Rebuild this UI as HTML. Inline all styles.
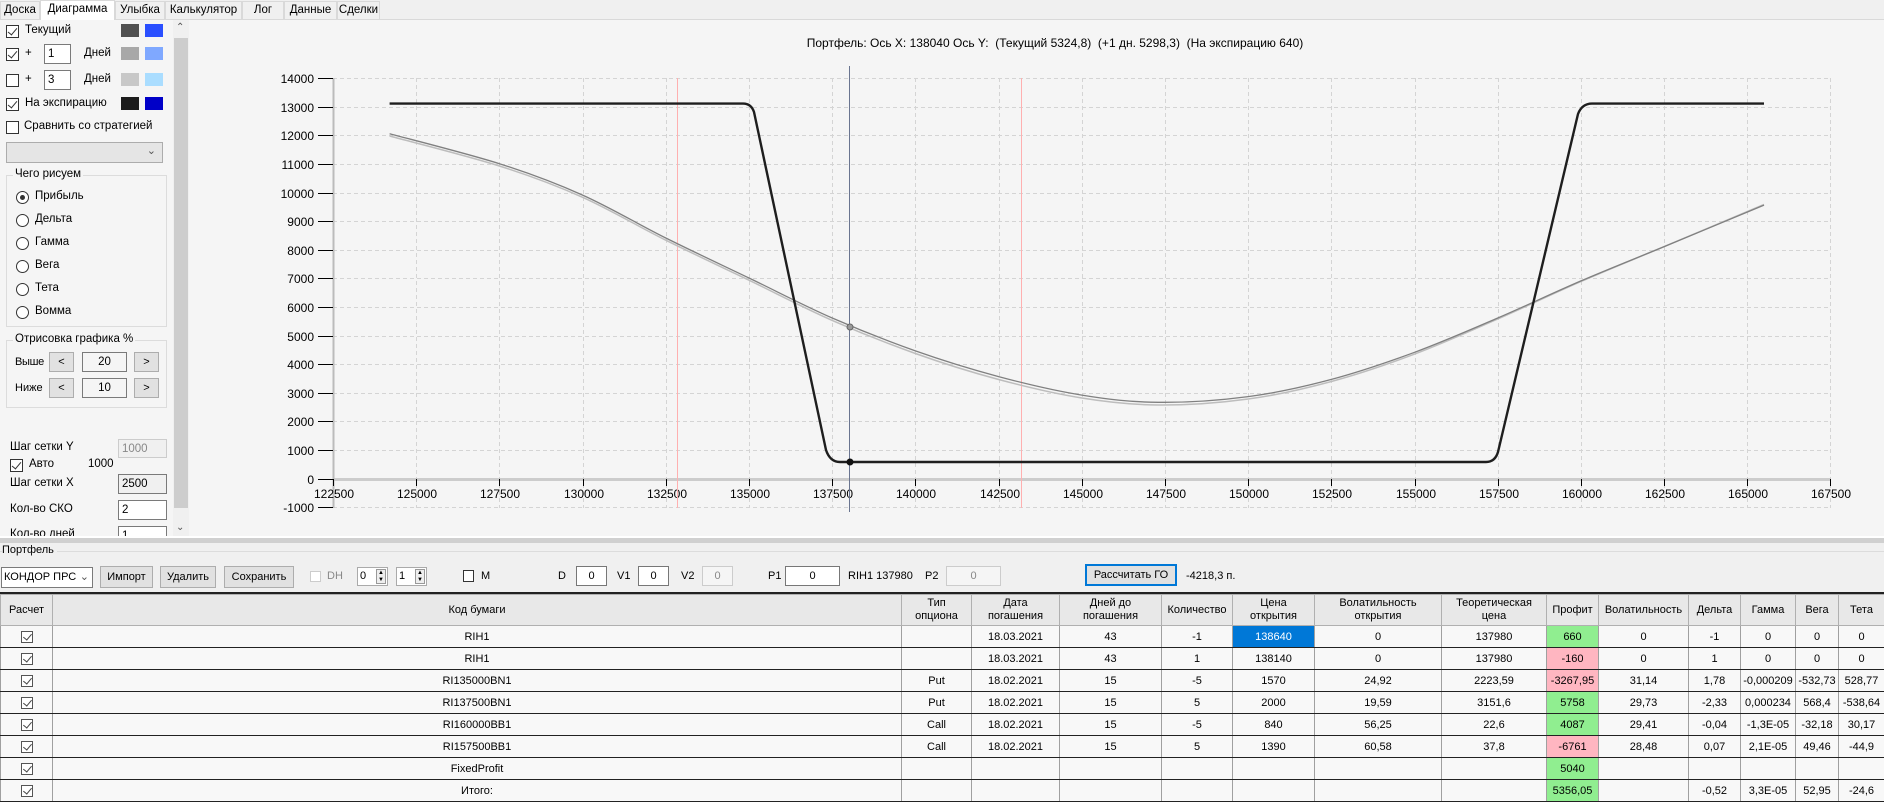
<!DOCTYPE html>
<html><head><meta charset="utf-8">
<style>
*{box-sizing:border-box;margin:0;padding:0}
body{width:1884px;height:801px;overflow:hidden;background:#f0f0f0;font-family:"Liberation Sans",sans-serif;font-size:11.5px;color:#000;position:relative}
.a{position:absolute}
.tab{position:absolute;top:1px;height:18px;border:1px solid #d9d9d9;border-bottom:none;background:#f0f0f0;font-size:11.5px;line-height:16px;text-align:center}
.cb{position:absolute;width:13px;height:13px;border:1px solid #333;background:#fff}
.cb.on::after{content:"";position:absolute;left:3px;top:0px;width:4px;height:8px;border:solid #333;border-width:0 1px 1px 0;transform:rotate(40deg)}
.rb{position:absolute;width:13px;height:13px;border:1px solid #333;border-radius:50%;background:#fff}
.rb.on::after{content:"";position:absolute;left:3px;top:3px;width:5px;height:5px;border-radius:50%;background:#333}
.tb{position:absolute;height:20px;border:1px solid #7a7a7a;background:#fff;padding-left:3px;line-height:18px;font-size:11.5px}
.btn{position:absolute;border:1px solid #adadad;background:#e1e1e1;text-align:center;font-size:11px}
.grp{position:absolute;border:1px solid #dcdcdc}
.grp span{position:absolute;top:-8px;left:6px;background:#f5f5f5;padding:0 2px}
table{border-collapse:collapse;table-layout:fixed;font-size:11px}
td,th{border:1px solid #a0a0a0;text-align:center;height:22px;padding:0;overflow:hidden;white-space:nowrap;font-weight:normal}
th{background:#e8e8e8;height:31px;line-height:13px;border-color:#b0b0b0}
tr td{border-bottom:1px solid #222;background:#f8f8f8}
.g{background:#90ee90 !important}.p{background:#ffb6c1 !important}.s{background:#0078d7 !important;color:#fff}
.ck{display:inline-block;width:12px;height:12px;border:1px solid #555;background:#fff;position:relative;vertical-align:middle}
.ck::after{content:"";position:absolute;left:3px;top:0;width:4px;height:7px;border:solid #444;border-width:0 1px 1px 0;transform:rotate(40deg)}
</style></head><body>
<div class="a" style="left:0;top:19px;width:1884px;height:1px;background:#d9d9d9"></div>
<div class="tab" style="left:0;width:40px">Доска</div>
<div class="tab" style="left:40px;width:75px;top:0;height:20px;background:#fff;border-color:#d9d9d9">Диаграмма</div>
<div class="tab" style="left:115px;width:50px">Улыбка</div>
<div class="tab" style="left:165px;width:77px">Калькулятор</div>
<div class="tab" style="left:242px;width:42px">Лог</div>
<div class="tab" style="left:284px;width:53px">Данные</div>
<div class="tab" style="left:337px;width:43px">Сделки</div>

<div class="a" style="left:0;top:20px;width:173px;height:516px;background:#f5f5f5"></div>
<div class="a" style="left:173px;top:20px;width:16px;height:516px;background:#f0f0f0"></div>
<div class="a" style="left:174px;top:38px;width:14px;height:470px;background:#cdcdcd"></div>
<div class="a" style="left:176px;top:22px;font-size:10px;color:#555">&#8963;</div>
<div class="a" style="left:176px;top:522px;font-size:10px;color:#555">&#8964;</div>

<div class="cb on" style="left:6px;top:25px"></div><div class="a" style="left:25px;top:24px">Текущий</div>
<div class="a" style="left:121px;top:24px;width:18px;height:13px;background:#505050"></div><div class="a" style="left:145px;top:24px;width:18px;height:13px;background:#2a4fff"></div>
<div class="cb on" style="left:6px;top:48px"></div><div class="a" style="left:25px;top:47px">+</div>
<div class="tb" style="left:44px;top:44px;width:27px">1</div><div class="a" style="left:84px;top:47px">Дней</div>
<div class="a" style="left:121px;top:47px;width:18px;height:13px;background:#a8a8a8"></div><div class="a" style="left:145px;top:47px;width:18px;height:13px;background:#7fa8ff"></div>
<div class="cb" style="left:6px;top:74px"></div><div class="a" style="left:25px;top:73px">+</div>
<div class="tb" style="left:44px;top:70px;width:27px">3</div><div class="a" style="left:84px;top:73px">Дней</div>
<div class="a" style="left:121px;top:73px;width:18px;height:13px;background:#c8c8c8"></div><div class="a" style="left:145px;top:73px;width:18px;height:13px;background:#aaddff"></div>
<div class="cb on" style="left:6px;top:98px"></div><div class="a" style="left:25px;top:97px">На экспирацию</div>
<div class="a" style="left:121px;top:97px;width:18px;height:13px;background:#1c1c1c"></div><div class="a" style="left:145px;top:97px;width:18px;height:13px;background:#0000c8"></div>
<div class="cb" style="left:6px;top:121px"></div><div class="a" style="left:24px;top:120px">Сравнить со стратегией</div>
<div class="a" style="left:6px;top:142px;width:157px;height:21px;background:#e5e5e5;border:1px solid #acacac"><span style="position:absolute;right:6px;top:1px;font-size:11px;color:#555">&#8964;</span></div>

<div class="grp" style="left:6px;top:175px;width:161px;height:152px"><span>Чего рисуем</span></div>
<div class="rb on" style="left:16px;top:191px"></div><div class="a" style="left:35px;top:190px">Прибыль</div>
<div class="rb" style="left:16px;top:214px"></div><div class="a" style="left:35px;top:213px">Дельта</div>
<div class="rb" style="left:16px;top:237px"></div><div class="a" style="left:35px;top:236px">Гамма</div>
<div class="rb" style="left:16px;top:260px"></div><div class="a" style="left:35px;top:259px">Вега</div>
<div class="rb" style="left:16px;top:283px"></div><div class="a" style="left:35px;top:282px">Тета</div>
<div class="rb" style="left:16px;top:306px"></div><div class="a" style="left:35px;top:305px">Вомма</div>

<div class="grp" style="left:6px;top:340px;width:161px;height:68px"><span>Отрисовка графика %</span></div>
<div class="a" style="left:15px;top:356px;font-size:11px;letter-spacing:-0.3px">Выше</div>
<div class="btn" style="left:49px;top:352px;width:25px;height:20px;line-height:18px">&lt;</div>
<div class="tb" style="left:82px;top:352px;width:45px;text-align:center;padding:0;background:#f5f5f5">20</div>
<div class="btn" style="left:134px;top:352px;width:25px;height:20px;line-height:18px">&gt;</div>
<div class="a" style="left:15px;top:382px;font-size:11px">Ниже</div>
<div class="btn" style="left:49px;top:378px;width:25px;height:20px;line-height:18px">&lt;</div>
<div class="tb" style="left:82px;top:378px;width:45px;text-align:center;padding:0;background:#f5f5f5">10</div>
<div class="btn" style="left:134px;top:378px;width:25px;height:20px;line-height:18px">&gt;</div>

<div class="a" style="left:10px;top:441px">Шаг сетки Y</div>
<div class="tb" style="left:118px;top:439px;width:49px;height:19px;background:#f0f0f0;color:#888;border-color:#ccc">1000</div>
<div class="cb on" style="left:10px;top:459px"></div><div class="a" style="left:29px;top:458px">Авто</div><div class="a" style="left:88px;top:458px">1000</div>
<div class="a" style="left:10px;top:477px">Шаг сетки X</div>
<div class="tb" style="left:118px;top:474px;width:49px;height:20px;background:#f0f0f0">2500</div>
<div class="a" style="left:10px;top:503px">Кол-во СКО</div>
<div class="tb" style="left:118px;top:500px;width:49px">2</div>
<div style="position:absolute;left:0;top:520px;width:172px;height:16px;overflow:hidden"><div class="a" style="left:10px;top:8px">Кол-во дней</div><div class="tb" style="left:118px;top:6px;width:49px">1</div></div>

<div class="a" style="left:189px;top:20px;width:1695px;height:516px;background:#f5f5f5"></div>
<div class="a" style="left:640px;top:36px;width:830px;text-align:center;font-size:12px">Портфель: Ось X: 138040 Ось Y:&nbsp; (Текущий 5324,8)&nbsp; (+1 дн. 5298,3)&nbsp; (На экспирацию 640)</div>
<svg class="a" style="left:0;top:0" width="1884" height="540" font-family="Liberation Sans" font-size="12">
<g stroke="#d4d4d4" stroke-dasharray="4,3" stroke-width="1">
<line x1="333" y1="78.5" x2="1831" y2="78.5"/><line x1="333" y1="107.5" x2="1831" y2="107.5"/><line x1="333" y1="135.5" x2="1831" y2="135.5"/><line x1="333" y1="164.5" x2="1831" y2="164.5"/><line x1="333" y1="193.5" x2="1831" y2="193.5"/><line x1="333" y1="221.5" x2="1831" y2="221.5"/><line x1="333" y1="250.5" x2="1831" y2="250.5"/><line x1="333" y1="278.5" x2="1831" y2="278.5"/><line x1="333" y1="307.5" x2="1831" y2="307.5"/><line x1="333" y1="336.5" x2="1831" y2="336.5"/><line x1="333" y1="364.5" x2="1831" y2="364.5"/><line x1="333" y1="393.5" x2="1831" y2="393.5"/><line x1="333" y1="421.5" x2="1831" y2="421.5"/><line x1="333" y1="450.5" x2="1831" y2="450.5"/><line x1="333" y1="507.5" x2="1831" y2="507.5"/>
<line x1="416.5" y1="78" x2="416.5" y2="508"/><line x1="499.5" y1="78" x2="499.5" y2="508"/><line x1="583.5" y1="78" x2="583.5" y2="508"/><line x1="666.5" y1="78" x2="666.5" y2="508"/><line x1="749.5" y1="78" x2="749.5" y2="508"/><line x1="832.5" y1="78" x2="832.5" y2="508"/><line x1="915.5" y1="78" x2="915.5" y2="508"/><line x1="999.5" y1="78" x2="999.5" y2="508"/><line x1="1082.5" y1="78" x2="1082.5" y2="508"/><line x1="1165.5" y1="78" x2="1165.5" y2="508"/><line x1="1248.5" y1="78" x2="1248.5" y2="508"/><line x1="1331.5" y1="78" x2="1331.5" y2="508"/><line x1="1415.5" y1="78" x2="1415.5" y2="508"/><line x1="1498.5" y1="78" x2="1498.5" y2="508"/><line x1="1581.5" y1="78" x2="1581.5" y2="508"/><line x1="1664.5" y1="78" x2="1664.5" y2="508"/><line x1="1747.5" y1="78" x2="1747.5" y2="508"/><line x1="1830.5" y1="78" x2="1830.5" y2="508"/>
</g>
<line x1="333" y1="479.5" x2="1831" y2="479.5" stroke="#ccc" stroke-width="3"/>
<line x1="333.5" y1="78" x2="333.5" y2="508" stroke="#bbb" stroke-width="2"/>
<g stroke="#000" stroke-width="1">
<line x1="318" y1="78.5" x2="333" y2="78.5"/><line x1="318" y1="107.5" x2="333" y2="107.5"/><line x1="318" y1="135.5" x2="333" y2="135.5"/><line x1="318" y1="164.5" x2="333" y2="164.5"/><line x1="318" y1="193.5" x2="333" y2="193.5"/><line x1="318" y1="221.5" x2="333" y2="221.5"/><line x1="318" y1="250.5" x2="333" y2="250.5"/><line x1="318" y1="278.5" x2="333" y2="278.5"/><line x1="318" y1="307.5" x2="333" y2="307.5"/><line x1="318" y1="336.5" x2="333" y2="336.5"/><line x1="318" y1="364.5" x2="333" y2="364.5"/><line x1="318" y1="393.5" x2="333" y2="393.5"/><line x1="318" y1="421.5" x2="333" y2="421.5"/><line x1="318" y1="450.5" x2="333" y2="450.5"/><line x1="318" y1="479.5" x2="333" y2="479.5"/><line x1="318" y1="507.5" x2="333" y2="507.5"/>
<line x1="333.5" y1="479" x2="333.5" y2="486"/><line x1="416.5" y1="479" x2="416.5" y2="486"/><line x1="499.5" y1="479" x2="499.5" y2="486"/><line x1="583.5" y1="479" x2="583.5" y2="486"/><line x1="666.5" y1="479" x2="666.5" y2="486"/><line x1="749.5" y1="479" x2="749.5" y2="486"/><line x1="832.5" y1="479" x2="832.5" y2="486"/><line x1="915.5" y1="479" x2="915.5" y2="486"/><line x1="999.5" y1="479" x2="999.5" y2="486"/><line x1="1082.5" y1="479" x2="1082.5" y2="486"/><line x1="1165.5" y1="479" x2="1165.5" y2="486"/><line x1="1248.5" y1="479" x2="1248.5" y2="486"/><line x1="1331.5" y1="479" x2="1331.5" y2="486"/><line x1="1415.5" y1="479" x2="1415.5" y2="486"/><line x1="1498.5" y1="479" x2="1498.5" y2="486"/><line x1="1581.5" y1="479" x2="1581.5" y2="486"/><line x1="1664.5" y1="479" x2="1664.5" y2="486"/><line x1="1747.5" y1="479" x2="1747.5" y2="486"/><line x1="1830.5" y1="479" x2="1830.5" y2="486"/>
</g>
<g text-anchor="end" fill="#000">
<text x="314" y="83">14000</text><text x="314" y="112">13000</text><text x="314" y="140">12000</text><text x="314" y="169">11000</text><text x="314" y="198">10000</text><text x="314" y="226">9000</text><text x="314" y="255">8000</text><text x="314" y="283">7000</text><text x="314" y="312">6000</text><text x="314" y="341">5000</text><text x="314" y="369">4000</text><text x="314" y="398">3000</text><text x="314" y="426">2000</text><text x="314" y="455">1000</text><text x="314" y="484">0</text><text x="314" y="512">-1000</text>
</g>
<g text-anchor="middle" fill="#000">
<text x="334" y="498">122500</text><text x="417" y="498">125000</text><text x="500" y="498">127500</text><text x="584" y="498">130000</text><text x="667" y="498">132500</text><text x="750" y="498">135000</text><text x="833" y="498">137500</text><text x="916" y="498">140000</text><text x="1000" y="498">142500</text><text x="1083" y="498">145000</text><text x="1166" y="498">147500</text><text x="1249" y="498">150000</text><text x="1332" y="498">152500</text><text x="1416" y="498">155000</text><text x="1499" y="498">157500</text><text x="1582" y="498">160000</text><text x="1665" y="498">162500</text><text x="1748" y="498">165000</text><text x="1831" y="498">167500</text>
</g>
<line x1="677.5" y1="78" x2="677.5" y2="508" stroke="#ffb0b0"/>
<line x1="1021.5" y1="78" x2="1021.5" y2="508" stroke="#ffb0b0"/>
<line x1="849.5" y1="66" x2="849.5" y2="512" stroke="#6a7590"/>
<path id="c2" d="M389.6,136 L499.4,166 L582.6,197.5 L665.8,240.5 L749,280.5 L832.2,320.5 L915.4,353.5 L998.6,379.5 L1081.8,398 L1158.3,405 L1248.2,399 L1331.4,381.5 L1414.6,354 L1497.8,319 L1581,281.5 L1664.2,246.5 L1764,204.5" fill="none" stroke="#bdbdbd" stroke-width="1.5"/>
<path id="c1" d="M389.6,133.7 L499.4,163.7 L582.6,195.1 L665.8,238 L749,278 L832.2,318 L915.4,350.9 L998.6,376.6 L1081.8,395.1 L1158.3,402.3 L1248.2,396.6 L1331.4,379.4 L1414.6,352.3 L1497.8,318 L1581,280.9 L1664.2,246.6 L1764,205.1" fill="none" stroke="#808080" stroke-width="1.3"/>
<path d="M389.6,103.6 L742,103.6 Q751,103 754,112 L826,450 Q830,462 840,462 L1486,462 Q1495,462 1498,452 L1578,114 Q1582,103.6 1592,103.6 L1764,103.6" fill="none" stroke="#1e1e1e" stroke-width="2.4" stroke-linejoin="round"/>
<circle cx="850" cy="327" r="3" fill="#999" stroke="#666"/>
<circle cx="850" cy="462" r="3.5" fill="#111"/>
</svg>
<script>
(function(){
function sm(id,off){
var xs=[389.6,499.4,582.6,665.8,749,832.2,915.4,998.6,1081.8,1158.3,1248.2,1331.4,1414.6,1497.8,1581,1664.2,1764];
var ys=[133.7,163.7,195.1,238,278,318,350.9,376.6,395.1,402.3,396.6,379.4,352.3,318,280.9,246.6,205.1];
var o=[2.3,2.3,2.2,2.2,2.2,2.4,2.6,2.9,2.9,2.7,2.4,2.1,1.8,1.0,0.6,0,-0.6];
var p=[];for(var i=0;i<xs.length;i++)p.push([xs[i],ys[i]+(off?o[i]:0)]);
var d="M"+p[0][0]+","+p[0][1];
for(var i=0;i<p.length-1;i++){var a=p[i-1]||p[i],b=p[i],c=p[i+1],e=p[i+2]||c;
d+=" C"+(b[0]+(c[0]-a[0])/6).toFixed(1)+","+(b[1]+(c[1]-a[1])/6).toFixed(1)+" "+(c[0]-(e[0]-b[0])/6).toFixed(1)+","+(c[1]-(e[1]-b[1])/6).toFixed(1)+" "+c[0]+","+c[1];}
document.getElementById(id).setAttribute("d",d);}
sm("c1",0);sm("c2",1);})();
</script>

<div class="a" style="left:0;top:536px;width:1884px;height:2px;background:#fff"></div>
<div class="a" style="left:0;top:538px;width:1884px;height:5px;background:#d0d0d0"></div>
<div class="a" style="left:0;top:543px;width:1884px;height:258px;background:#f0f0f0"></div>
<div class="a" style="left:0;top:551px;width:1884px;height:1px;background:#dcdcdc"></div>
<div class="a" style="left:2px;top:544px;background:#f0f0f0;padding-right:3px;font-size:11px">Портфель</div>

<div class="a" style="left:1px;top:567px;width:92px;height:21px;background:#fff;border:1px solid #7a7a7a;font-size:11px;line-height:19px;padding-left:2px;overflow:hidden">КОНДОР ПРС<span style="position:absolute;right:3px;top:0;background:#fff;padding-left:2px;color:#555">&#8964;</span></div>
<div class="btn" style="left:100px;top:566px;width:53px;height:22px;line-height:20px">Импорт</div>
<div class="btn" style="left:160px;top:566px;width:56px;height:22px;line-height:20px">Удалить</div>
<div class="btn" style="left:224px;top:566px;width:70px;height:22px;line-height:20px">Сохранить</div>
<div class="a" style="left:310px;top:571px;width:11px;height:11px;border:1px solid #ccc;background:#fff"></div><div class="a" style="left:327px;top:570px;color:#888;font-size:11px">DH</div>
<div class="a" style="left:357px;top:567px;width:31px;height:19px;border:1px solid #aaa;background:#fff;font-size:11px;padding-left:2px;line-height:17px">0<span style="position:absolute;right:1px;top:1px;width:10px;height:15px;border:1px solid #999;background:#eee;font-size:6px;line-height:7px;text-align:center">▲<br>▼</span></div>
<div class="a" style="left:396px;top:567px;width:31px;height:19px;border:1px solid #aaa;background:#fff;font-size:11px;padding-left:2px;line-height:17px">1<span style="position:absolute;right:1px;top:1px;width:10px;height:15px;border:1px solid #999;background:#eee;font-size:6px;line-height:7px;text-align:center">▲<br>▼</span></div>
<div class="a" style="left:463px;top:570px;width:11px;height:12px;border:1px solid #333;background:#fff"></div><div class="a" style="left:481px;top:570px;font-size:11px">M</div>
<div class="a" style="left:558px;top:570px;font-size:11px">D</div>
<div class="a" style="left:576px;top:566px;width:31px;height:20px;border:1px solid #777;background:#fff;text-align:center;line-height:18px;font-size:11px">0</div>
<div class="a" style="left:617px;top:570px;font-size:11px">V1</div>
<div class="a" style="left:638px;top:566px;width:31px;height:20px;border:1px solid #777;background:#fff;text-align:center;line-height:18px;font-size:11px">0</div>
<div class="a" style="left:681px;top:570px;font-size:11px">V2</div>
<div class="a" style="left:702px;top:566px;width:31px;height:20px;border:1px solid #ccc;background:#f5f5f5;color:#888;text-align:center;line-height:18px;font-size:11px">0</div>
<div class="a" style="left:768px;top:570px;font-size:11px">P1</div>
<div class="a" style="left:785px;top:566px;width:55px;height:20px;border:1px solid #777;background:#fff;text-align:center;line-height:18px;font-size:11px">0</div>
<div class="a" style="left:848px;top:570px;font-size:11px">RIH1 137980</div>
<div class="a" style="left:925px;top:570px;font-size:11px">P2</div>
<div class="a" style="left:946px;top:566px;width:55px;height:20px;border:1px solid #ccc;background:#f5f5f5;color:#888;text-align:center;line-height:18px;font-size:11px">0</div>
<div class="a" style="left:1085px;top:564px;width:92px;height:22px;border:2px solid #0078d7;background:#e1e1e1;text-align:center;line-height:18px;font-size:11px">Рассчитать ГО</div>
<div class="a" style="left:1186px;top:570px;font-size:11px">-4218,3 п.</div>

<div class="a" style="left:0;top:592px;width:1884px;height:2px;background:#222"></div>
<table class="a" style="left:0;top:594px;width:1884px">
<colgroup><col style="width:52px"><col style="width:849px"><col style="width:70px"><col style="width:88px"><col style="width:102px"><col style="width:71px"><col style="width:82px"><col style="width:127px"><col style="width:105px"><col style="width:52px"><col style="width:90px"><col style="width:52px"><col style="width:55px"><col style="width:43px"><col style="width:46px"></colgroup>
<tr><th>Расчет</th><th>Код бумаги</th><th>Тип<br>опциона</th><th>Дата<br>погашения</th><th>Дней до<br>погашения</th><th>Количество</th><th>Цена<br>открытия</th><th>Волатильность<br>открытия</th><th>Теоретическая<br>цена</th><th>Профит</th><th>Волатильность</th><th>Дельта</th><th>Гамма</th><th>Вега</th><th>Тета</th></tr>
<tr><td><span class="ck"></span></td><td>RIH1</td><td></td><td>18.03.2021</td><td>43</td><td>-1</td><td class="s">138640</td><td>0</td><td>137980</td><td class="g">660</td><td>0</td><td>-1</td><td>0</td><td>0</td><td>0</td></tr>
<tr><td><span class="ck"></span></td><td>RIH1</td><td></td><td>18.03.2021</td><td>43</td><td>1</td><td>138140</td><td>0</td><td>137980</td><td class="p">-160</td><td>0</td><td>1</td><td>0</td><td>0</td><td>0</td></tr>
<tr><td><span class="ck"></span></td><td>RI135000BN1</td><td>Put</td><td>18.02.2021</td><td>15</td><td>-5</td><td>1570</td><td>24,92</td><td>2223,59</td><td class="p">-3267,95</td><td>31,14</td><td>1,78</td><td>-0,000209</td><td>-532,73</td><td>528,77</td></tr>
<tr><td><span class="ck"></span></td><td>RI137500BN1</td><td>Put</td><td>18.02.2021</td><td>15</td><td>5</td><td>2000</td><td>19,59</td><td>3151,6</td><td class="g">5758</td><td>29,73</td><td>-2,33</td><td>0,000234</td><td>568,4</td><td>-538,64</td></tr>
<tr><td><span class="ck"></span></td><td>RI160000BB1</td><td>Call</td><td>18.02.2021</td><td>15</td><td>-5</td><td>840</td><td>56,25</td><td>22,6</td><td class="g">4087</td><td>29,41</td><td>-0,04</td><td>-1,3E-05</td><td>-32,18</td><td>30,17</td></tr>
<tr><td><span class="ck"></span></td><td>RI157500BB1</td><td>Call</td><td>18.02.2021</td><td>15</td><td>5</td><td>1390</td><td>60,58</td><td>37,8</td><td class="p">-6761</td><td>28,48</td><td>0,07</td><td>2,1E-05</td><td>49,46</td><td>-44,9</td></tr>
<tr><td><span class="ck"></span></td><td>FixedProfit</td><td></td><td></td><td></td><td></td><td></td><td></td><td></td><td class="g">5040</td><td></td><td></td><td></td><td></td><td></td></tr>
<tr><td><span class="ck"></span></td><td>Итого:</td><td></td><td></td><td></td><td></td><td></td><td></td><td></td><td class="g">5356,05</td><td></td><td>-0,52</td><td>3,3E-05</td><td>52,95</td><td>-24,6</td></tr>
</table>
</body></html>
